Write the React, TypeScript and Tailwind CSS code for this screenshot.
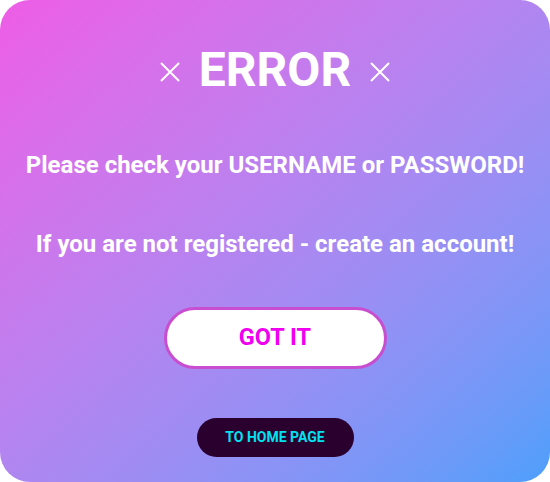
export default function App() {
  return (
    <div className="h-[482px] w-[550px] bg-white font-['Roboto',sans-serif]">
      <div className="flex h-full w-full flex-col items-center rounded-[30px] bg-gradient-to-br from-[#ee5ce6] to-[#4c9ffb] text-white">
        <div className="mt-[42px] flex items-center gap-[18px]">
          <svg width="22" height="22" viewBox="0 0 22 22" className="mt-[4px]">
            <path d="M2 2L20 20M20 2L2 20" stroke="white" strokeWidth="2" />
          </svg>
          <h1 className="text-[48px] font-bold leading-[56px]">ERROR</h1>
          <svg width="22" height="22" viewBox="0 0 22 22" className="mt-[4px]">
            <path d="M2 2L20 20M20 2L2 20" stroke="white" strokeWidth="2" />
          </svg>
        </div>
        <p className="mt-[53px] text-[24px] font-bold leading-[28px]">Please check your USERNAME or PASSWORD!</p>
        <p className="mt-[51px] text-[24px] font-bold leading-[28px]">If you are not registered - create an account!</p>
        <button className="mt-[49px] h-[62px] w-[223px] rounded-full border-[3px] border-[#c84ecf] bg-white text-[23.5px] font-bold text-[#ef00ef]">
          GOT IT
        </button>
        <button className="mt-[49px] h-[39px] w-[157px] rounded-full bg-[#2a002f] text-[14px] font-bold text-[#00e3ef]">
          TO HOME PAGE
        </button>
      </div>
    </div>
  );
}
